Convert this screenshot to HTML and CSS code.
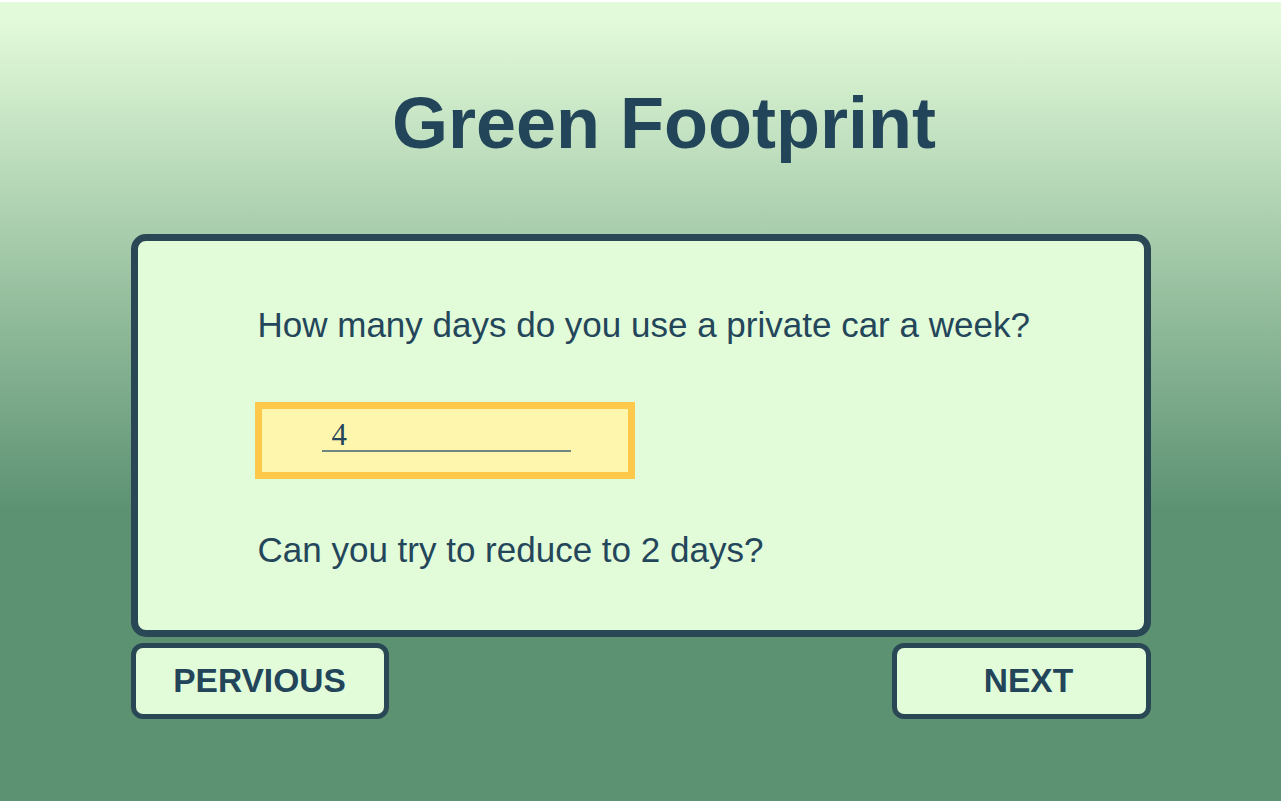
FILE: index.html
```html
<!DOCTYPE html>
<html lang="en">
<head>
<meta charset="utf-8">
<title>Green Footprint</title>
<link rel="stylesheet" href="styles.css">
</head>
<body>
<main class="page">
  <h1 class="title">Green Footprint</h1>
  <section class="card">
    <p class="question">How many days do you use a private car a week?</p>
    <div class="answer">
      <input class="field" type="text" value="4" aria-label="Days per week">
    </div>
    <p class="note">Can you try to reduce to 2 days?</p>
  </section>
  <nav class="nav">
    <button class="btn" type="button">PERVIOUS</button>
    <button class="btn btn-next" type="button">NEXT</button>
  </nav>
</main>
</body>
</html>
```

FILE: styles.css
```css
html, body {
  margin: 0;
  padding: 0;
}

body {
  min-height: 801px;
  font-family: "Liberation Sans", Arial, sans-serif;
  color: #23455a;
  background:
    linear-gradient(#ffffff 0, #ffffff 2px, #e3fbda 2px, #e2fad9 22px, #5c9272 510px, #5c9272 100%);
  background-repeat: no-repeat;
  background-color: #5c9272;
}

.page {
  width: 1020px;
  margin: 0 auto;
  padding-top: 87px;
}

.title {
  margin: 0;
  padding-left: 47px;
  font-size: 72px;
  line-height: 72px;
  font-weight: bold;
  text-align: center;
  color: #23455a;
}

.card {
  box-sizing: border-box;
  margin-top: 75px;
  height: 403px;
  padding: 64px 40px 60px 117px;
  border: 7px solid #2a4755;
  border-radius: 15px;
  background: #e2fbd9;
}

.question,
.note {
  margin: 0;
  padding-left: 3px;
  font-size: 35px;
  line-height: 40px;
  color: #24465a;
}

.answer {
  box-sizing: border-box;
  width: 380px;
  height: 77px;
  margin: 57px 0 51px;
  padding: 11px 57px 0 60px;
  border: 7px solid #fec84a;
  background: #fff6ad;
}

.field {
  box-sizing: border-box;
  display: block;
  width: 249px;
  height: 32px;
  margin: 0;
  padding: 0 0 0 10px;
  border: none;
  border-bottom: 2px solid #6f8580;
  background: transparent;
  font-family: "Liberation Serif", "Times New Roman", serif;
  font-size: 31px;
  line-height: 30px;
  color: #24465a;
  outline: none;
}

.nav {
  display: flex;
  justify-content: space-between;
  margin-top: 6px;
}

.btn {
  box-sizing: border-box;
  width: 258px;
  height: 76px;
  padding: 0;
  border: 5px solid #2a4755;
  border-radius: 12px;
  background: #e2fbd9;
  font-family: "Liberation Sans", Arial, sans-serif;
  font-size: 33.5px;
  font-weight: bold;
  color: #23455a;
  text-align: center;
}

.btn-next {
  width: 259px;
  padding-left: 15px;
}
```
